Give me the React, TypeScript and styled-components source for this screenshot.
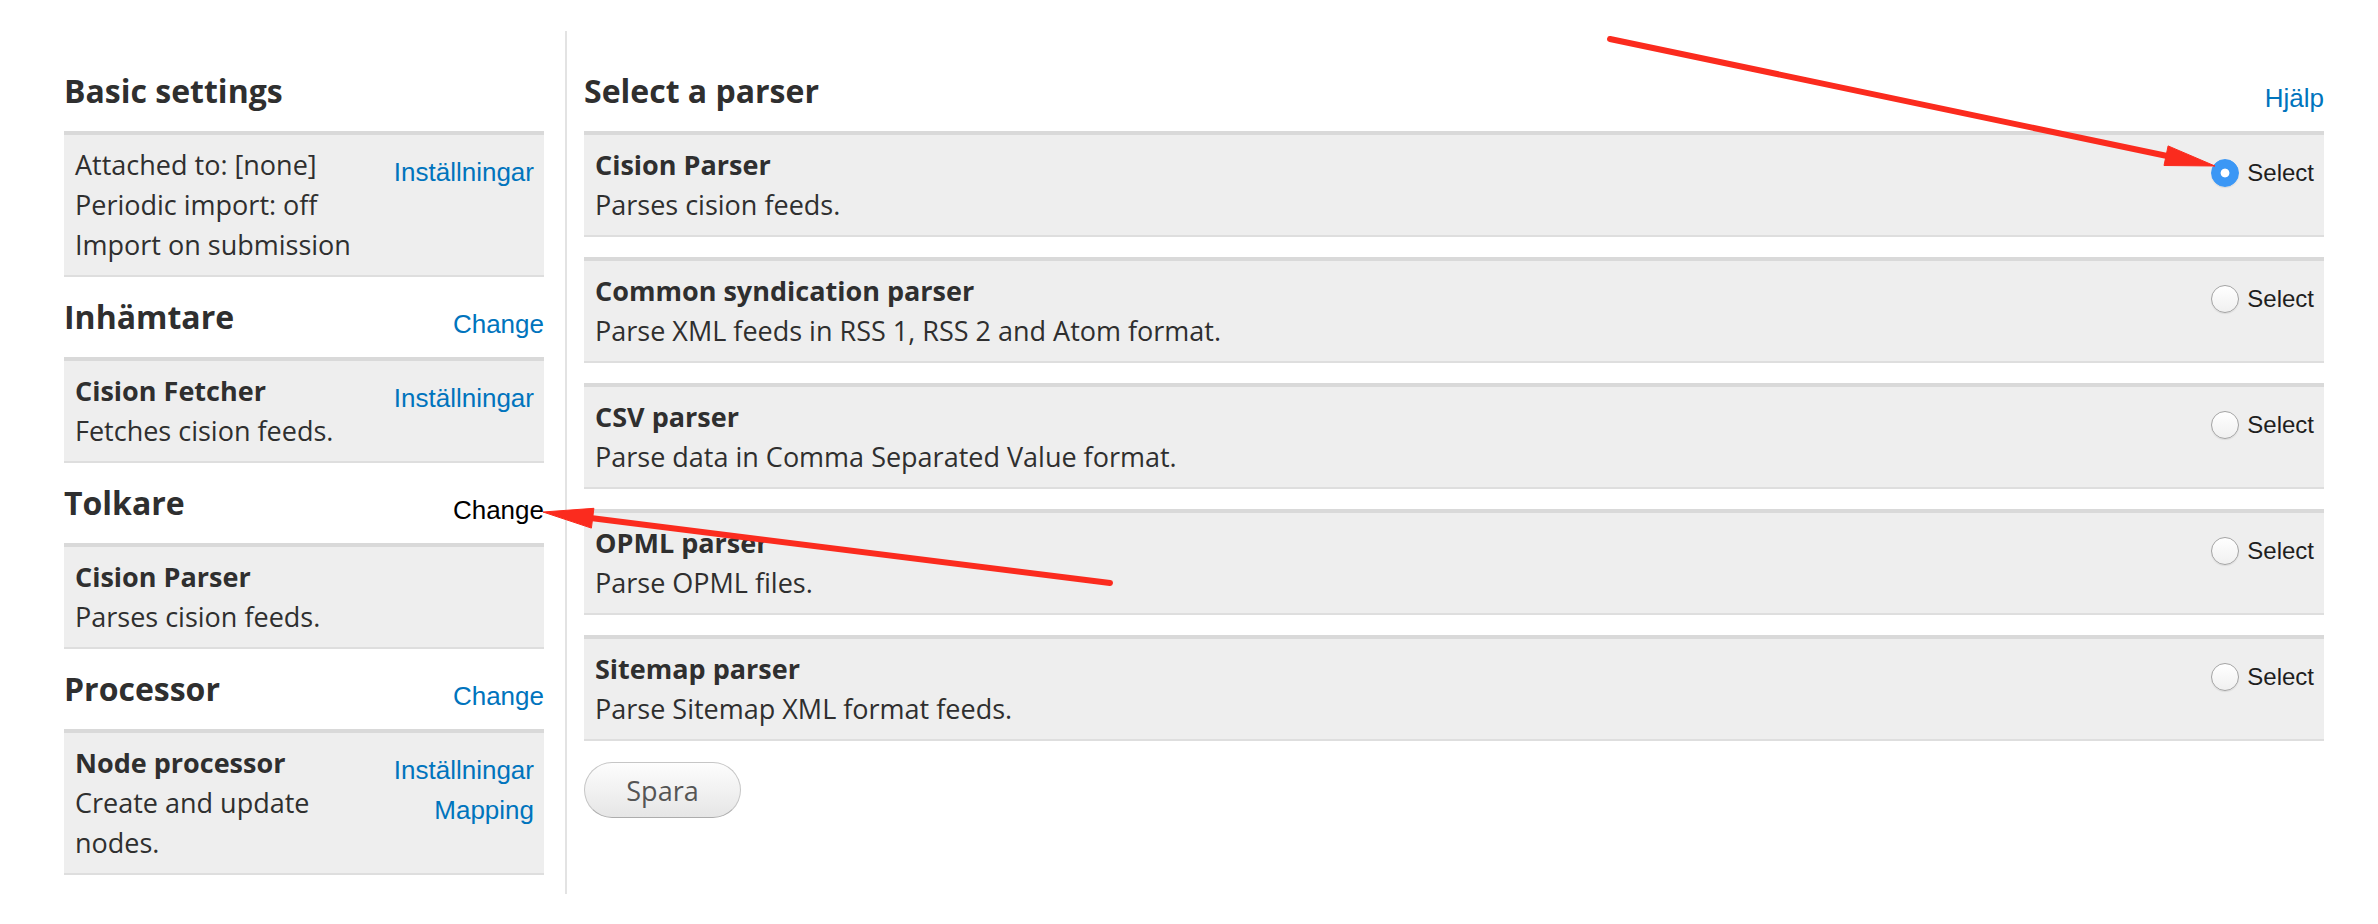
import React from "react";
import styled, { createGlobalStyle, css } from "styled-components";

const GlobalStyle = createGlobalStyle`
  html, body {
    margin: 0;
    padding: 0;
    background: #ffffff;
  }
  body {
    font-family: "Open Sans", "DejaVu Sans", sans-serif;
    color: #2f2f2f;
  }
`;

const Page = styled.div`
  position: relative;
  display: flex;
  align-items: stretch;
  width: 2378px;
  box-sizing: border-box;
  padding: 31px 0 0 64px;
`;

const Sidebar = styled.aside`
  flex: none;
  width: 480px;
  padding: 38px 21px 19px 0;
  border-right: 2px solid #e3e3e3;
`;

const Main = styled.main`
  flex: none;
  width: 1740px;
  padding: 38px 0 0 17px;
`;

const SectionHeader = styled.div`
  display: flex;
  justify-content: space-between;
  align-items: flex-start;
  margin: 18px 0;

  &:first-child {
    margin-top: 0;
  }
`;

const Heading = styled.h2`
  margin: 0;
  font-family: "Open Sans", "DejaVu Sans", sans-serif;
  font-size: 32px;
  font-weight: 700;
  line-height: 44px;
  color: #2f2f2f;
`;

const HeaderLink = styled.a<{ $plain?: boolean }>`
  display: block;
  margin-top: 15px;
  font-family: "Liberation Sans", Arial, sans-serif;
  font-size: 26px;
  line-height: 29px;
  color: ${(p) => (p.$plain ? "#000000" : "#0074bd")};
  text-decoration: none;
  cursor: pointer;
`;

const panel = css`
  box-sizing: border-box;
  background: #eeeeee;
  border-top: 4px solid #d9d9d9;
  border-bottom: 2px solid #dedede;
  padding: 10px 10px 10px 11px;
  display: flex;
  justify-content: space-between;
  align-items: flex-start;
`;

const InfoBox = styled.div`
  ${panel}
`;

const InfoText = styled.div`
  flex: 0 1 290px;
  font-size: 27px;
  line-height: 40px;
`;

const Line = styled.div<{ $bold?: boolean }>`
  font-weight: ${(p) => (p.$bold ? 700 : 400)};
`;

const LinkList = styled.div`
  display: flex;
  flex-direction: column;
  align-items: flex-end;
  padding-top: 7px;
`;

const BoxLink = styled.a`
  font-family: "Liberation Sans", Arial, sans-serif;
  font-size: 26px;
  line-height: 40px;
  color: #0074bd;
  text-decoration: none;
  cursor: pointer;
`;

const ParserList = styled.div`
  display: flex;
  flex-direction: column;
  gap: 20px;
`;

const ParserRow = styled.div`
  ${panel}
`;

const ParserText = styled.div`
  font-size: 27px;
  line-height: 40px;
`;

const SelectControl = styled.label`
  display: flex;
  align-items: center;
  gap: 8px;
  margin-top: 14px;
  font-family: "Liberation Sans", Arial, sans-serif;
  font-size: 24px;
  line-height: 28px;
  color: #1e1e1e;
  cursor: pointer;
`;

const Radio = styled.input`
  appearance: none;
  -webkit-appearance: none;
  box-sizing: border-box;
  width: 28px;
  height: 28px;
  margin: 0;
  border-radius: 50%;
  border: 1px solid #a4a4a4;
  background: linear-gradient(#ffffff, #f0f0f0);
  box-shadow: 0 1px 1px rgba(0, 0, 0, 0.08);
  cursor: pointer;

  &:checked {
    border-color: #3b97f5;
    background: radial-gradient(circle at center, #ffffff 0 4px, #3b97f5 4.8px);
  }
`;

const SaveButton = styled.button`
  display: block;
  margin-top: 21px;
  box-sizing: border-box;
  width: 157px;
  height: 56px;
  padding: 0;
  border: 1px solid #c6c6c6;
  border-bottom-color: #adadad;
  border-radius: 28px;
  background: linear-gradient(#fdfdfd, #e6e6e6);
  font-family: "Open Sans", "DejaVu Sans", sans-serif;
  font-size: 27px;
  color: #555555;
  cursor: pointer;
`;

const Overlay = styled.svg`
  position: absolute;
  left: 0;
  top: 0;
  width: 2378px;
  height: 924px;
  pointer-events: none;
`;

type Arrow = { tail: [number, number]; tip: [number, number] };

function arrowParts({ tail, tip }: Arrow) {
  const dx = tip[0] - tail[0];
  const dy = tip[1] - tail[1];
  const len = Math.hypot(dx, dy);
  const ux = dx / len;
  const uy = dy / len;
  const headLen = 50;
  const half = 10;
  const bx = tip[0] - ux * headLen;
  const by = tip[1] - uy * headLen;
  const px = -uy;
  const py = ux;
  const pts = [
    [tip[0], tip[1]],
    [bx + px * half, by + py * half],
    [bx - px * half, by - py * half],
  ]
    .map((p) => p.map((v) => v.toFixed(1)).join(","))
    .join(" ");
  return { lineEnd: [bx + ux * 6, by + uy * 6], pts };
}

const arrows: Arrow[] = [
  { tail: [1610, 39], tip: [2215, 166] },
  { tail: [1110, 583], tip: [543, 512] },
];

const parsers = [
  { title: "Cision Parser", desc: "Parses cision feeds.", checked: true },
  {
    title: "Common syndication parser",
    desc: "Parse XML feeds in RSS 1, RSS 2 and Atom format.",
  },
  { title: "CSV parser", desc: "Parse data in Comma Separated Value format." },
  { title: "OPML parser", desc: "Parse OPML files." },
  { title: "Sitemap parser", desc: "Parse Sitemap XML format feeds." },
];

export default function App() {
  return (
    <>
      <GlobalStyle />
      <Page>
        <Sidebar>
          <SectionHeader>
            <Heading>Basic settings</Heading>
          </SectionHeader>
          <InfoBox>
            <InfoText>
              <Line>Attached to: [none]</Line>
              <Line>Periodic import: off</Line>
              <Line>Import on submission</Line>
            </InfoText>
            <LinkList>
              <BoxLink>Inställningar</BoxLink>
            </LinkList>
          </InfoBox>

          <SectionHeader>
            <Heading>Inhämtare</Heading>
            <HeaderLink>Change</HeaderLink>
          </SectionHeader>
          <InfoBox>
            <InfoText>
              <Line $bold>Cision Fetcher</Line>
              <Line>Fetches cision feeds.</Line>
            </InfoText>
            <LinkList>
              <BoxLink>Inställningar</BoxLink>
            </LinkList>
          </InfoBox>

          <SectionHeader>
            <Heading>Tolkare</Heading>
            <HeaderLink $plain>Change</HeaderLink>
          </SectionHeader>
          <InfoBox>
            <InfoText>
              <Line $bold>Cision Parser</Line>
              <Line>Parses cision feeds.</Line>
            </InfoText>
          </InfoBox>

          <SectionHeader>
            <Heading>Processor</Heading>
            <HeaderLink>Change</HeaderLink>
          </SectionHeader>
          <InfoBox>
            <InfoText>
              <Line $bold>Node processor</Line>
              <Line>Create and update nodes.</Line>
            </InfoText>
            <LinkList>
              <BoxLink>Inställningar</BoxLink>
              <BoxLink>Mapping</BoxLink>
            </LinkList>
          </InfoBox>
        </Sidebar>

        <Main>
          <SectionHeader>
            <Heading>Select a parser</Heading>
            <HeaderLink>Hjälp</HeaderLink>
          </SectionHeader>
          <ParserList>
            {parsers.map((p) => (
              <ParserRow key={p.title}>
                <ParserText>
                  <Line $bold>{p.title}</Line>
                  <Line>{p.desc}</Line>
                </ParserText>
                <SelectControl>
                  <Radio type="radio" name="parser" defaultChecked={!!p.checked} />
                  Select
                </SelectControl>
              </ParserRow>
            ))}
          </ParserList>
          <SaveButton type="button">Spara</SaveButton>
        </Main>

        <Overlay viewBox="0 0 2378 924">
          {arrows.map((a, i) => {
            const { lineEnd, pts } = arrowParts(a);
            return (
              <g key={i} fill="#fb2b1e" stroke="#fb2b1e">
                <line
                  x1={a.tail[0]}
                  y1={a.tail[1]}
                  x2={lineEnd[0]}
                  y2={lineEnd[1]}
                  strokeWidth={6}
                  strokeLinecap="round"
                />
                <polygon points={pts} strokeWidth={1} strokeLinejoin="round" />
              </g>
            );
          })}
        </Overlay>
      </Page>
    </>
  );
}
